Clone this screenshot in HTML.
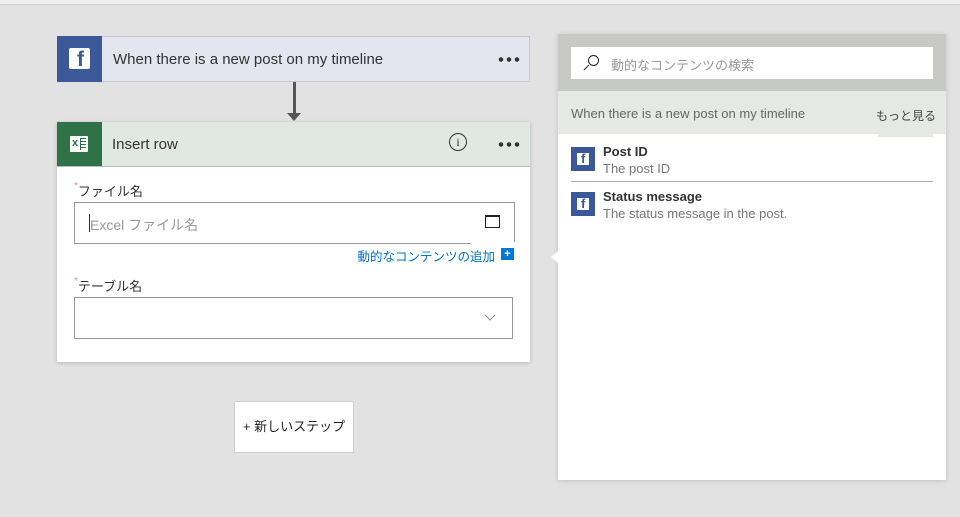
<!DOCTYPE html>
<html><head><meta charset="utf-8"><style>
*{box-sizing:border-box;margin:0;padding:0}
body{width:960px;height:517px;background:#e2e2e2;font-family:"Liberation Sans","Noto Sans CJK JP",sans-serif;position:relative;overflow:hidden;color:#333}
.a{position:absolute}
</style></head><body>
<div class="a" style="left:0;top:0;width:960px;height:5px;background:#f0f0f0;border-bottom:1px solid #cfcfcf"></div>

<!-- trigger card -->
<div class="a" style="left:57px;top:36px;width:473px;height:46px;background:#e3e6ef;border:1px solid #c6c8cf"></div>
<div class="a" style="left:57px;top:36px;width:45px;height:46px;background:#3b5998"></div>
<div class="a" style="left:69px;top:48px;width:21px;height:21px;background:#fff;border-radius:2px"></div>
<div class="a" style="left:77px;top:48px;font:bold 21px 'Liberation Sans';color:#3b5998">f</div>
<div class="a" style="left:113px;top:51px;font-size:15px;color:#333">When there is a new post on my timeline</div>
<div class="a" style="left:497px;top:57px;width:24px;height:5px;background:radial-gradient(circle,#333 2px,transparent 2.5px) 0 0/8px 5px repeat-x"></div>

<!-- arrow -->
<div class="a" style="left:293px;top:82px;width:3px;height:33px;background:#555"></div>
<div class="a" style="left:287px;top:113px;width:0;height:0;border-left:7px solid transparent;border-right:7px solid transparent;border-top:8px solid #555"></div>

<!-- action card -->
<div class="a" style="left:57px;top:122px;width:473px;height:240px;background:#fff;box-shadow:0 1px 4px rgba(0,0,0,.2)"></div>
<div class="a" style="left:57px;top:122px;width:473px;height:45px;background:#e0e9e1;border-bottom:1px solid #bbb"></div>
<div class="a" style="left:57px;top:122px;width:45px;height:44px;background:#2e7245"></div>
<div class="a" style="left:70px;top:136px;width:18px;height:16px;background:#fff;border-radius:1px"></div>
<div class="a" style="left:72px;top:137px;font:bold 11px 'Liberation Sans';color:#2e7245">x</div>
<div class="a" style="left:80px;top:138px;width:6px;height:12px;border-left:1px solid #2e7245;background:repeating-linear-gradient(#2e7245 0 1px,#fff 1px 3px)"></div>
<div class="a" style="left:112px;top:136px;font-size:15px;color:#333">Insert row</div>
<div class="a" style="left:449px;top:133px;width:18px;height:18px;border:1.3px solid #333;border-radius:50%;font:12px 'Liberation Serif';text-align:center;line-height:16px">i</div>
<div class="a" style="left:497px;top:142px;width:24px;height:5px;background:radial-gradient(circle,#333 2px,transparent 2.5px) 0 0/8px 5px repeat-x"></div>

<div class="a" style="left:74px;top:181px;font-size:13px;color:#333"><span style="color:#e88;font-size:10px;vertical-align:top">*</span>ファイル名</div>
<div class="a" style="left:74px;top:202px;width:441px;height:42px;border:1px solid #999;background:#fff"></div>
<div class="a" style="left:89px;top:214px;width:1px;height:18px;background:#333"></div>
<div class="a" style="left:90px;top:215px;font-size:14px;color:#999">Excel ファイル名</div>
<div class="a" style="left:485px;top:215px;width:15px;height:13px;border:1px solid #222;border-top-width:2px"></div>
<div class="a" style="left:471px;top:242px;width:45px;height:3px;background:#fff"></div>
<div class="a" style="left:330px;top:246px;width:165px;text-align:right;font-size:12.5px;color:#0072c6;white-space:nowrap">動的なコンテンツの追加</div>
<div class="a" style="left:501px;top:248px;width:13px;height:12px;background:#0078d7;color:#fff;font:bold 11px 'Liberation Sans';text-align:center;line-height:12px">+</div>

<div class="a" style="left:74px;top:276px;font-size:13px;color:#333"><span style="color:#e88;font-size:10px;vertical-align:top">*</span>テーブル名</div>
<div class="a" style="left:74px;top:297px;width:439px;height:42px;border:1px solid #999;background:#fff"></div>
<div class="a" style="left:486px;top:311px;width:8px;height:8px;border-right:1px solid #888;border-bottom:1px solid #888;transform:rotate(45deg)"></div>

<!-- new step -->
<div class="a" style="left:234px;top:401px;width:120px;height:52px;background:#fff;border:1px solid #d0d0d0;font-size:13px;color:#222;line-height:50px;text-align:center">+ 新しいステップ</div>

<!-- dynamic panel -->
<div class="a" style="left:558px;top:34px;width:388px;height:446px;background:#fff;box-shadow:0 1px 5px rgba(0,0,0,.15)"></div>
<div class="a" style="left:551px;top:250px;width:0;height:0;border-top:7px solid transparent;border-bottom:7px solid transparent;border-right:8px solid #fff"></div>
<div class="a" style="left:558px;top:34px;width:388px;height:57px;background:#c8c9c6"></div>
<div class="a" style="left:571px;top:47px;width:362px;height:32px;background:#fff"></div>
<div class="a" style="left:588px;top:55px;width:11px;height:11px;border:1.3px solid #222;border-radius:50%"></div>
<div class="a" style="left:583px;top:67px;width:7px;height:1.3px;background:#222;transform:rotate(-45deg)"></div>
<div class="a" style="left:611px;top:55px;font-size:13px;color:#999">動的なコンテンツの検索</div>
<div class="a" style="left:558px;top:91px;width:388px;height:43px;background:#e6e8e5"></div>
<div class="a" style="left:878px;top:100px;width:55px;height:37px;background:#e6e8e5"></div>
<div class="a" style="left:571px;top:106px;font-size:13px;color:#666">When there is a new post on my timeline</div>
<div class="a" style="left:876px;top:107px;font-size:12px;color:#444;white-space:nowrap">もっと見る</div>

<div class="a" style="left:571px;top:147px;width:24px;height:24px;background:#3b5998"></div>
<div class="a" style="left:577px;top:153px;width:12px;height:12px;background:#fff"></div>
<div class="a" style="left:581px;top:151px;font:bold 13px 'Liberation Sans';color:#3b5998">f</div>
<div class="a" style="left:603px;top:144px;font-size:13px;font-weight:bold;color:#333">Post ID</div>
<div class="a" style="left:603px;top:161px;font-size:13px;color:#777">The post ID</div>
<div class="a" style="left:571px;top:181px;width:362px;height:1px;background:#aaa"></div>
<div class="a" style="left:571px;top:192px;width:24px;height:24px;background:#3b5998"></div>
<div class="a" style="left:577px;top:198px;width:12px;height:12px;background:#fff"></div>
<div class="a" style="left:581px;top:196px;font:bold 13px 'Liberation Sans';color:#3b5998">f</div>
<div class="a" style="left:603px;top:189px;font-size:13px;font-weight:bold;color:#333">Status message</div>
<div class="a" style="left:603px;top:206px;font-size:13px;color:#777">The status message in the post.</div>
</body></html>
